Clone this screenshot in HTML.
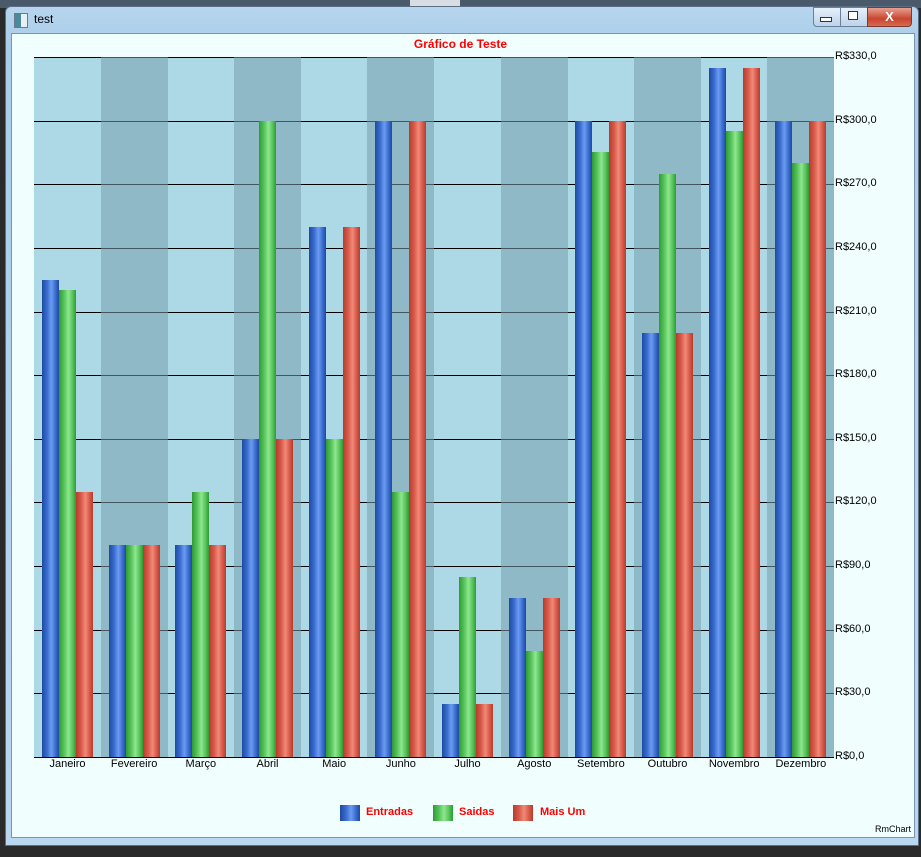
<!DOCTYPE html>
<html><head><meta charset="utf-8"><style>
body{margin:0;width:921px;height:857px;background:#2a2a2a;position:relative;overflow:hidden;font-family:"Liberation Sans",sans-serif}
.a{position:absolute}
.win{left:5px;top:6px;width:912px;height:838px;background:linear-gradient(#b7d5ee,#a9cde9 40px,#b9d7ef);border:1px solid #5a6e86;border-radius:6px 6px 0 0}
.client{left:11px;top:33px;width:902px;height:803px;background:#f0fffe;border:1px solid #7d93ab}
.bar{position:absolute;width:17px}
.b{background:linear-gradient(90deg,#1d4aa0,#3a6cd0 30%,#6b9cf0 55%,#3a6cd0 80%,#1d4aa0)}
.g{background:linear-gradient(90deg,#2f9a35,#56c45a 30%,#8fe690 55%,#56c45a 80%,#2f9a35)}
.r{background:linear-gradient(90deg,#b83b2a,#d8594a 30%,#f08a78 55%,#d8594a 80%,#b83b2a)}
.lbl{position:absolute;font-size:11px;color:#000;width:67px;text-align:center;top:758px}
.yl{position:absolute;left:835px;font-size:11px;color:#000}
</style></head><body>
<div class="a" style="left:0;top:0;width:921px;height:8px;background:#4a5a6a"></div>
<div class="a" style="left:410px;top:0;width:50px;height:8px;background:#d8dde3"></div>
<div class="a win"></div>
<div class="a" style="left:14px;top:13px;width:12px;height:13px;background:linear-gradient(90deg,#4a8a9a 50%,#e8f0f4 50%);border:1px solid #6a7a8a"></div>
<div class="a" style="left:34px;top:12px;font-size:12px;color:#000">test</div>
<div class="a" style="left:813px;top:7px;width:26px;height:18px;background:linear-gradient(#e6f0fa,#bcd3ea);border:1px solid #6a7f98;border-radius:0 0 0 4px"></div>
<div class="a" style="left:820px;top:17px;width:10px;height:3px;background:#fff;border:1px solid #333"></div>
<div class="a" style="left:840px;top:7px;width:26px;height:18px;background:linear-gradient(#e6f0fa,#bcd3ea);border:1px solid #6a7f98"></div>
<div class="a" style="left:848px;top:11px;width:8px;height:7px;border:1px solid #333;background:#fff"></div>
<div class="a" style="left:867px;top:7px;width:43px;height:18px;background:linear-gradient(#e8a090,#c8452f 60%,#d86a50);border:1px solid #7a3a30;border-radius:0 0 4px 0;color:#fff;font-weight:bold;font-size:13px;text-align:center;line-height:18px">X</div>
<div class="a client"></div>
<div class="a" style="left:0;top:0;width:921px;text-align:center;top:37px;font-size:12px;font-weight:bold;color:#f00">Gráfico de Teste</div>
<div id="plot"></div>
<div class="a" style="left:340px;top:805px;width:20px;height:16px" class="b"></div>
<div class="a" style="left:366px;top:806px;font-size:11px;font-weight:bold;color:#f00">Entradas</div>
<div class="a" style="left:459px;top:806px;font-size:11px;font-weight:bold;color:#f00">Saidas</div>
<div class="a" style="left:540px;top:806px;font-size:11px;font-weight:bold;color:#f00">Mais Um</div>
<div class="a" style="left:875px;top:824px;font-size:9px;color:#000">RmChart</div>
<script>
var p=document.getElementById('plot'),h='';
var names=['Janeiro','Fevereiro','Março','Abril','Maio','Junho','Julho','Agosto','Setembro','Outubro','Novembro','Dezembro'];
var v=[[225,220,125],[100,100,100],[100,125,100],[150,300,150],[250,150,250],[300,125,300],[25,85,25],[75,50,75],[300,285,300],[200,275,200],[325,295,325],[300,280,300]];
var k=700/330;
for(var i=0;i<12;i++){var x=34+i*66.67;h+='<div class="a" style="left:'+x+'px;top:57px;width:67px;height:700px;background:#add8e6"></div>';}
for(var j=0;j<=11;j++){var y=57+j*700/11;h+='<div class="a" style="left:34px;top:'+Math.round(y)+'px;width:800px;height:1px;background:#000"></div>';h+='<div class="yl" style="top:'+(Math.round(y)-7)+'px">R$'+(330-j*30)+',0</div>';}
for(var i=1;i<12;i+=2){var x=34+i*66.67;h+='<div class="a" style="left:'+x+'px;top:57px;width:67px;height:700px;background:rgba(120,160,175,.55)"></div>';}
var c=['b','g','r'];
for(var i=0;i<12;i++){var x=34+i*66.67;for(var s=0;s<3;s++){var hh=Math.round(v[i][s]*k);h+='<div class="bar '+c[s]+'" style="left:'+Math.round(x+8+s*17)+'px;top:'+(757-hh)+'px;height:'+hh+'px"></div>';}
h+='<div class="lbl" style="left:'+x+'px">'+names[i]+'</div>';}
h+='<div class="a" style="left:34px;top:757px;width:800px;height:1px;background:#000"></div>';
h+='<div class="bar b" style="left:340px;top:805px;height:16px;width:20px"></div><div class="bar g" style="left:433px;top:805px;height:16px;width:20px"></div><div class="bar r" style="left:513px;top:805px;height:16px;width:20px"></div>';
p.innerHTML=h;
</script>
</body></html>
